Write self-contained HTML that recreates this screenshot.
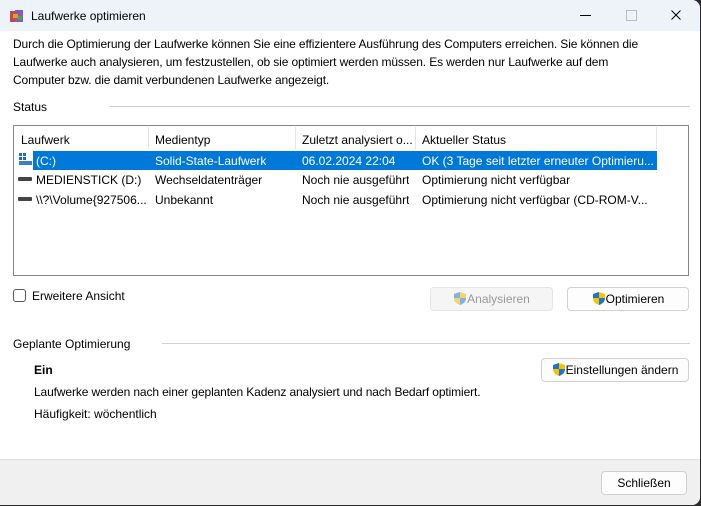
<!DOCTYPE html>
<html><head><meta charset="utf-8"><style>
body{margin:0;width:701px;height:506px;background:#2b2b2b;font-family:"Liberation Sans",sans-serif;font-size:12px;color:#000;overflow:hidden;position:relative}
.win{position:absolute;left:0;top:0;width:700px;height:505px;background:#fff;border-radius:0 8px 8px 0;overflow:hidden}
.t{position:absolute;white-space:nowrap}
.title{position:absolute;left:0;top:0;width:700px;height:31px;background:#eef3f9}
.line{position:absolute;height:1px;background:#d0d0d0}
.list{position:absolute;left:13px;top:125px;width:674px;height:149px;border:1px solid #828790;background:#fff}
.sep{position:absolute;top:1px;width:1px;height:22px;background:#e5e5e5}
.btn{position:absolute;height:22px;border:1px solid #d0d0d0;border-radius:4px;background:#fdfdfd;text-align:center;line-height:22px}
.footer{position:absolute;left:0;top:459px;width:700px;height:47px;background:#f0f0f0;border-top:1px solid #e0e0e0}
.cell{position:absolute;white-space:nowrap;overflow:hidden}
.intro{letter-spacing:-0.12px}
</style></head><body><div class="win">
<div class="title">
<svg style="position:absolute;left:9px;top:8px" width="16" height="16" viewBox="0 0 16 16"><rect x="1" y="3" width="8" height="11" fill="#c04a4a"/><rect x="6" y="2" width="8" height="12" fill="#8a5ab0"/><rect x="4" y="6" width="5" height="4" fill="#e0a030"/><rect x="9" y="8" width="4" height="4" fill="#50a050"/></svg>
<div class="t" style="left:31px;top:9px">Laufwerke optimieren</div>
<div style="position:absolute;left:580px;top:15px;width:11px;height:1px;background:#000"></div>
<div style="position:absolute;left:626px;top:10px;width:9px;height:9px;border:1px solid #bbb"></div>
<svg style="position:absolute;left:671px;top:10px" width="10" height="10" viewBox="0 0 10 10"><path d="M0.5 0.5L9.5 9.5M9.5 0.5L0.5 9.5" stroke="#000" stroke-width="1"/></svg>
</div>
<div class="t intro" style="left:13px;top:35px;line-height:18px">Durch die Optimierung der Laufwerke können Sie eine effizientere Ausführung des Computers erreichen. Sie können die<br>Laufwerke auch analysieren, um festzustellen, ob sie optimiert werden müssen. Es werden nur Laufwerke auf dem<br>Computer bzw. die damit verbundenen Laufwerke angezeigt.</div>
<div class="t" style="left:13px;top:100px">Status</div>
<div class="line" style="left:109px;top:106px;width:581px"></div>
<div class="list">
<div class="sep" style="left:134px"></div><div class="sep" style="left:281px"></div><div class="sep" style="left:401px"></div><div class="sep" style="left:642px"></div>
<div class="t" style="left:7px;top:7px">Laufwerk</div>
<div class="t" style="left:141px;top:7px">Medientyp</div>
<div class="t" style="left:288px;top:7px">Zuletzt analysiert o...</div>
<div class="t" style="left:408px;top:7px">Aktueller Status</div>
<div style="position:absolute;left:19px;top:25px;width:624px;height:19px;background:#0078d7"></div>
<svg style="position:absolute;left:4px;top:26px" width="14" height="14" viewBox="0 0 14 14"><rect x="1" y="1" width="3" height="3" fill="#1a6fc4"/><rect x="5" y="1" width="3" height="3" fill="#1a6fc4"/><rect x="1" y="5" width="3" height="3" fill="#1a6fc4"/><rect x="5" y="5" width="3" height="3" fill="#1a6fc4"/><rect x="1" y="9" width="13" height="4" fill="#3d7fbf"/></svg>
<div class="cell" style="left:22px;top:28px;color:#fff">(C:)</div>
<div class="cell" style="left:141px;top:28px;color:#fff">Solid-State-Laufwerk</div>
<div class="cell" style="left:288px;top:28px;color:#fff">06.02.2024 22:04</div>
<div class="cell" style="left:408px;top:28px;color:#fff;width:232px">OK (3 Tage seit letzter erneuter Optimieru...</div>
<div style="position:absolute;left:4px;top:51px;width:14px;height:4px;background:#444;border-radius:1px"></div>
<div class="cell" style="left:22px;top:47px">MEDIENSTICK (D:)</div>
<div class="cell" style="left:141px;top:47px">Wechseldatenträger</div>
<div class="cell" style="left:288px;top:47px">Noch nie ausgeführt</div>
<div class="cell" style="left:408px;top:47px">Optimierung nicht verfügbar</div>
<div style="position:absolute;left:4px;top:71px;width:14px;height:4px;background:#444;border-radius:1px"></div>
<div class="cell" style="left:22px;top:67px;width:115px">\\?\Volume{927506...</div>
<div class="cell" style="left:141px;top:67px">Unbekannt</div>
<div class="cell" style="left:288px;top:67px">Noch nie ausgeführt</div>
<div class="cell" style="left:408px;top:67px;width:235px">Optimierung nicht verfügbar (CD-ROM-V...</div>
</div>
<div style="position:absolute;left:13px;top:289px;width:11px;height:11px;border:1px solid #555;border-radius:3px"></div>
<div class="t" style="left:32px;top:289px">Erweitere Ansicht</div>
<div class="btn" style="left:430px;top:287px;width:121px;background:#f5f5f5;border-color:#e5e5e5;color:#999">
<svg style="vertical-align:-3px" width="14" height="15" viewBox="0 0 14 15"><path d="M7 1L1 3v4c0 4 3 6 6 7 3-1 6-3 6-7V3z" fill="#f5d36a"/><path d="M7 1L1 3v4h6z M7 7h6c0 4-3 6-6 7z" fill="#7db3e6"/></svg>Analysieren</div>
<div class="btn" style="left:567px;top:287px;width:120px">
<svg style="vertical-align:-3px" width="14" height="15" viewBox="0 0 14 15"><path d="M7 1L1 3v4c0 4 3 6 6 7 3-1 6-3 6-7V3z" fill="#f8c300"/><path d="M7 1L1 3v4h6z M7 7h6c0 4-3 6-6 7z" fill="#1e73d0"/></svg>Optimieren</div>
<div class="t" style="left:13px;top:337px">Geplante Optimierung</div>
<div class="line" style="left:162px;top:343px;width:528px"></div>
<div class="btn" style="left:541px;top:358px;width:146px">
<svg style="vertical-align:-3px" width="14" height="15" viewBox="0 0 14 15"><path d="M7 1L1 3v4c0 4 3 6 6 7 3-1 6-3 6-7V3z" fill="#f8c300"/><path d="M7 1L1 3v4h6z M7 7h6c0 4-3 6-6 7z" fill="#1e73d0"/></svg>Einstellungen ändern</div>
<div class="t" style="left:34px;top:363px;font-weight:bold">Ein</div>
<div class="t intro" style="left:34px;top:385px">Laufwerke werden nach einer geplanten Kadenz analysiert und nach Bedarf optimiert.</div>
<div class="t" style="left:34px;top:407px">Häufigkeit: wöchentlich</div>
<div class="footer"><div class="btn" style="left:601px;top:11px;width:84px">Schließen</div></div>
</div></body></html>
